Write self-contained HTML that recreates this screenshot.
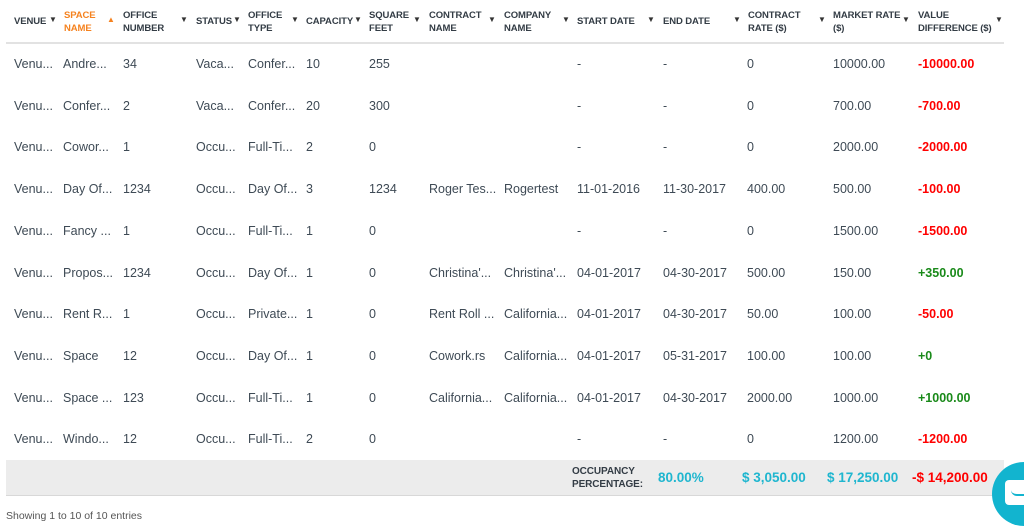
<!DOCTYPE html>
<html><head><meta charset="utf-8"><style>
*{margin:0;padding:0;box-sizing:border-box}
body{width:1024px;height:524px;overflow:hidden;background:#fff;font-family:"Liberation Sans",sans-serif;color:#3e4a55;position:relative}
.h{position:absolute;font-size:9.5px;font-weight:bold;line-height:13px;color:#333c45;text-transform:uppercase;letter-spacing:-0.1px}
.a{position:absolute;font-size:8px;color:#333}
.c{position:absolute;font-size:12.5px;line-height:14px;white-space:nowrap}
.r{color:#f00}.g{color:#1a8a1a}
.t{position:absolute;font-size:13.5px;font-weight:bold;color:#1fb6cf}
</style></head><body>
<div style="position:absolute;left:6px;top:42px;width:998px;height:2px;background:#e2e2e2"></div>
<div style="position:absolute;left:6px;top:460px;width:998px;height:36px;background:#ececec;border-bottom:1px solid #d8d8d8"></div>

<div class="h" style="left:14px;top:15px">VENUE</div><div class="a" style="left:49px;top:15px">▼</div>
<div class="h" style="left:64px;top:9px;color:#f5821f">SPACE<br>NAME</div><div class="a" style="left:107px;top:15px;color:#f5821f">▲</div>
<div class="h" style="left:123px;top:9px">OFFICE<br>NUMBER</div><div class="a" style="left:180px;top:15px">▼</div>
<div class="h" style="left:196px;top:15px">STATUS</div><div class="a" style="left:233px;top:15px">▼</div>
<div class="h" style="left:248px;top:9px">OFFICE<br>TYPE</div><div class="a" style="left:291px;top:15px">▼</div>
<div class="h" style="left:306px;top:15px">CAPACITY</div><div class="a" style="left:354px;top:15px">▼</div>
<div class="h" style="left:369px;top:9px">SQUARE<br>FEET</div><div class="a" style="left:413px;top:15px">▼</div>
<div class="h" style="left:429px;top:9px">CONTRACT<br>NAME</div><div class="a" style="left:488px;top:15px">▼</div>
<div class="h" style="left:504px;top:9px">COMPANY<br>NAME</div><div class="a" style="left:562px;top:15px">▼</div>
<div class="h" style="left:577px;top:15px">START DATE</div><div class="a" style="left:647px;top:15px">▼</div>
<div class="h" style="left:663px;top:15px">END DATE</div><div class="a" style="left:733px;top:15px">▼</div>
<div class="h" style="left:748px;top:9px">CONTRACT<br>RATE ($)</div><div class="a" style="left:818px;top:15px">▼</div>
<div class="h" style="left:833px;top:9px">MARKET RATE<br>($)</div><div class="a" style="left:902px;top:15px">▼</div>
<div class="h" style="left:918px;top:9px">VALUE<br>DIFFERENCE ($)</div><div class="a" style="left:995px;top:15px">▼</div>

<div id="rows"></div>
<script>
var X=[14,63,123,196,248,306,369,429,504,577,663,747,833,918];
var R=[
["Venu...","Andre...","34","Vaca...","Confer...","10","255","","","-","-","0","10000.00","-10000.00"],
["Venu...","Confer...","2","Vaca...","Confer...","20","300","","","-","-","0","700.00","-700.00"],
["Venu...","Cowor...","1","Occu...","Full-Ti...","2","0","","","-","-","0","2000.00","-2000.00"],
["Venu...","Day Of...","1234","Occu...","Day Of...","3","1234","Roger Tes...","Rogertest","11-01-2016","11-30-2017","400.00","500.00","-100.00"],
["Venu...","Fancy ...","1","Occu...","Full-Ti...","1","0","","","-","-","0","1500.00","-1500.00"],
["Venu...","Propos...","1234","Occu...","Day Of...","1","0","Christina'...","Christina'...","04-01-2017","04-30-2017","500.00","150.00","+350.00"],
["Venu...","Rent R...","1","Occu...","Private...","1","0","Rent Roll ...","California...","04-01-2017","04-30-2017","50.00","100.00","-50.00"],
["Venu...","Space","12","Occu...","Day Of...","1","0","Cowork.rs","California...","04-01-2017","05-31-2017","100.00","100.00","+0"],
["Venu...","Space ...","123","Occu...","Full-Ti...","1","0","California...","California...","04-01-2017","04-30-2017","2000.00","1000.00","+1000.00"],
["Venu...","Windo...","12","Occu...","Full-Ti...","2","0","","","-","-","0","1200.00","-1200.00"]];
var h="";
R.forEach(function(r,i){var y=57+i*41.7;r.forEach(function(v,j){var cl="c";if(j==13){cl+=v[0]=="+"?" g":" r";}
h+='<div class="'+cl+'" style="left:'+X[j]+'px;top:'+y+'px'+(j==13?';font-weight:bold':'')+'">'+v+'</div>';});});
document.getElementById("rows").innerHTML=h;
</script>

<div class="h" style="left:572px;top:465px;font-size:10px">OCCUPANCY<br>PERCENTAGE:</div>
<div class="t" style="left:658px;top:470px">80.00%</div>
<div class="t" style="left:742px;top:470px">$ 3,050.00</div>
<div class="t" style="left:827px;top:470px">$ 17,250.00</div>
<div class="t" style="left:912px;top:470px;color:#f00">-$ 14,200.00</div>

<div style="position:absolute;left:6px;top:510px;font-size:10.5px;color:#555">Showing 1 to 10 of 10 entries</div>

<div style="position:absolute;left:992px;top:462px;width:64px;height:64px;border-radius:50%;background:#12b4cf"></div>
<div style="position:absolute;left:1005px;top:480px;width:30px;height:25px;border-radius:4px;background:#fff"></div>
<div style="position:absolute;left:1011px;top:490px;width:20px;height:6px;border-bottom:2px solid #12b4cf;border-radius:0 0 10px 10px"></div>
</body></html>
